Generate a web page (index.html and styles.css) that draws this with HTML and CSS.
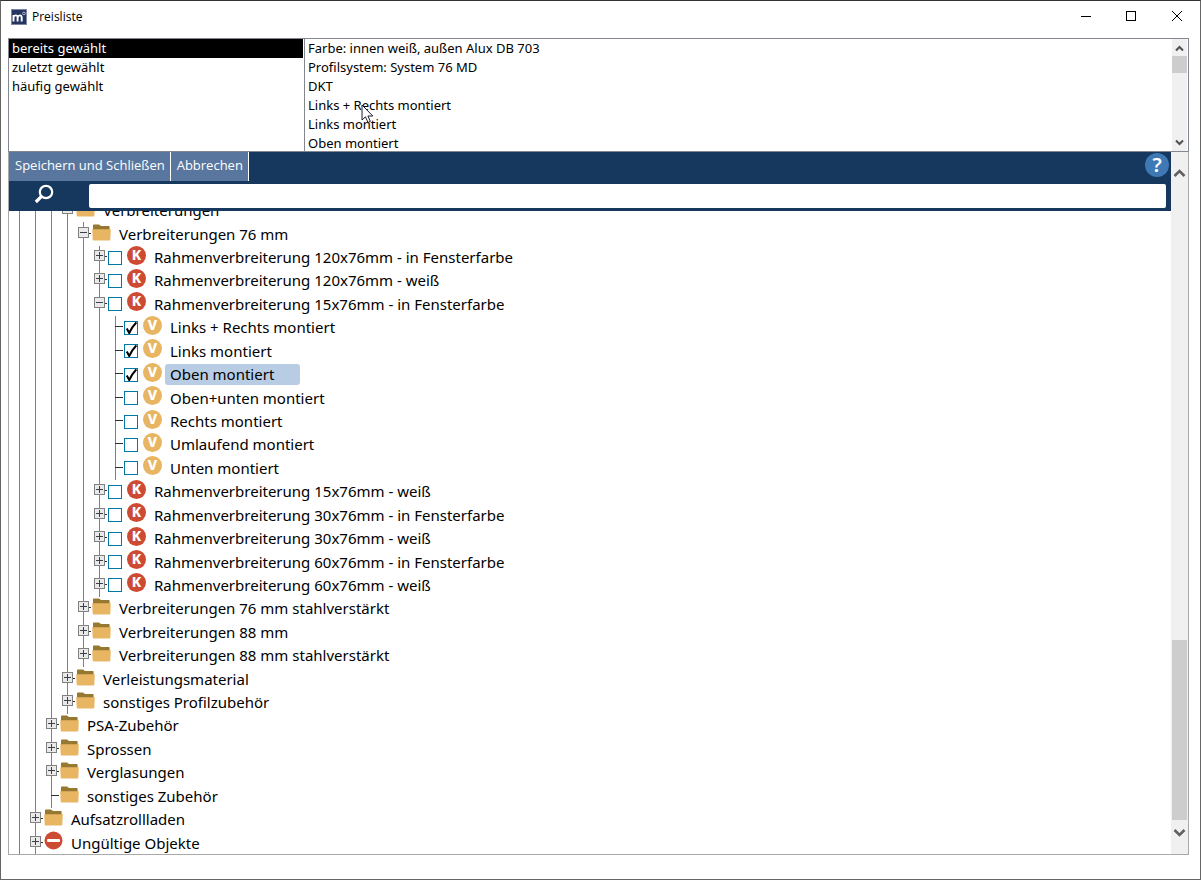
FILE: index.html
```html
<!DOCTYPE html>
<html lang="de">
<head>
<meta charset="utf-8">
<title>Preisliste</title>
<link rel="stylesheet" href="styles.css">
</head>
<body>
<div class="window">
  <header class="titlebar">
    <svg class="app-icon" width="16" height="16" viewBox="0 0 16 16" aria-hidden="true">
      <rect x="0.5" y="0.5" width="15" height="15" fill="#26355f" stroke="#7d86a3"/>
      <path d="M2.5 12.5V6M2.5 8.2Q3 6.4 4.8 6.4T6.6 8.4V12.5M6.6 8.4Q7.2 6.4 8.9 6.4T10.7 8.4V12.5" fill="none" stroke="#fff" stroke-width="1.9"/>
      <circle cx="12.9" cy="4.4" r="1.3" fill="none" stroke="#c3c9da" stroke-width="0.9"/>
    </svg>
    <h1 class="title">Preisliste</h1>
    <div class="window-buttons">
      <button type="button" aria-label="Minimieren"><svg width="12" height="12" viewBox="0 0 12 12"><path d="M1 5.5H11" stroke="#000"/></svg></button>
      <button type="button" aria-label="Maximieren"><svg width="12" height="12" viewBox="0 0 12 12"><rect x="1.5" y="0.5" width="9" height="9" fill="none" stroke="#000"/></svg></button>
      <button type="button" aria-label="Schließen"><svg width="12" height="12" viewBox="0 0 12 12"><path d="M2 0L12 10M12 0L2 10" stroke="#000"/></svg></button>
    </div>
  </header>

  <main class="frame">
    <section class="lists">
      <ul class="list list-filter">
        <li class="selected">bereits gewählt</li>
        <li>zuletzt gewählt</li>
        <li>häufig gewählt</li>
      </ul>
      <ul class="list list-items">
        <li>Farbe: innen weiß, außen Alux DB 703</li>
        <li>Profilsystem: System 76 MD</li>
        <li>DKT</li>
        <li>Links + Rechts montiert</li>
        <li>Links montiert</li>
        <li>Oben montiert</li>
      </ul>
      <div class="scrollbar scrollbar-list">
        <svg width="9" height="7" viewBox="0 0 9 7"><path d="M1 5.5L4.5 2L8 5.5" fill="none" stroke="#505050" stroke-width="2"/></svg>
        <div class="thumb"></div>
        <svg width="9" height="7" viewBox="0 0 9 7"><path d="M1 1.5L4.5 5L8 1.5" fill="none" stroke="#505050" stroke-width="2"/></svg>
      </div>
      <svg class="pointer" width="13" height="20" viewBox="0 0 13 20"><path d="M1 1V16L4.4 12.8L7 18.5L9.4 17.4L6.9 12H11.8Z" fill="#fff" stroke="#1c1c2c"/></svg>
    </section>

    <section class="browser">
      <div class="content">
        <div class="toolbar">
          <div class="actions">
            <button type="button" class="action">Speichern und Schließen</button>
            <button type="button" class="action">Abbrechen</button>
            <button type="button" class="help" aria-label="Hilfe">?</button>
          </div>
          <div class="search">
            <label for="q" aria-label="Suchen"><svg width="20" height="20" viewBox="0 0 20 20"><circle cx="12" cy="8" r="6.2" fill="none" stroke="#fff" stroke-width="2.2"/><path d="M7.8 12.2L1.8 18" stroke="#fff" stroke-width="3.2"/></svg></label>
            <input id="q" type="text">
          </div>
        </div>
        <div class="tree-view"><ul class="tree" id="tree"></ul></div>
      </div>
      <div class="scrollbar scrollbar-tree">
        <svg width="13" height="10" viewBox="0 0 13 10"><path d="M1.5 8L6.5 3L11.5 8" fill="none" stroke="#606060" stroke-width="2.6"/></svg>
        <div class="track"><div class="thumb"></div></div>
        <svg width="13" height="10" viewBox="0 0 13 10"><path d="M1.5 2L6.5 7L11.5 2" fill="none" stroke="#606060" stroke-width="2.6"/></svg>
      </div>
    </section>
  </main>
</div>
<script src="tree.js"></script>
</body>
</html>
```
FILE: tree.js
```js
// [depth, toggle, kind, label, checked, selected]
const rows = [
  [3, "-", "folder", "Verbreiterungen"],
  [4, "-", "folder", "Verbreiterungen 76 mm"],
  [5, "+", "k", "Rahmenverbreiterung 120x76mm - in Fensterfarbe"],
  [5, "+", "k", "Rahmenverbreiterung 120x76mm - weiß"],
  [5, "-", "k", "Rahmenverbreiterung 15x76mm - in Fensterfarbe"],
  [6, "", "v", "Links + Rechts montiert", true],
  [6, "", "v", "Links montiert", true],
  [6, "", "v", "Oben montiert", true, true],
  [6, "", "v", "Oben+unten montiert"],
  [6, "", "v", "Rechts montiert"],
  [6, "", "v", "Umlaufend montiert"],
  [6, "", "v", "Unten montiert"],
  [5, "+", "k", "Rahmenverbreiterung 15x76mm - weiß"],
  [5, "+", "k", "Rahmenverbreiterung 30x76mm - in Fensterfarbe"],
  [5, "+", "k", "Rahmenverbreiterung 30x76mm - weiß"],
  [5, "+", "k", "Rahmenverbreiterung 60x76mm - in Fensterfarbe"],
  [5, "+", "k", "Rahmenverbreiterung 60x76mm - weiß"],
  [4, "+", "folder", "Verbreiterungen 76 mm stahlverstärkt"],
  [4, "+", "folder", "Verbreiterungen 88 mm"],
  [4, "+", "folder", "Verbreiterungen 88 mm stahlverstärkt"],
  [3, "+", "folder", "Verleistungsmaterial"],
  [3, "+", "folder", "sonstiges Profilzubehör"],
  [2, "+", "folder", "PSA-Zubehör"],
  [2, "+", "folder", "Sprossen"],
  [2, "+", "folder", "Verglasungen"],
  [2, "", "folder", "sonstiges Zubehör"],
  [1, "+", "folder", "Aufsatzrollladen"],
  [1, "+", "invalid", "Ungültige Objekte"]
];

const icons = {
  folder: '<svg class="icon folder" width="19" height="17" viewBox="0 0 19 17"><path d="M1 1Q1 0.5 1.8 0.5H7L9 2H17Q17.6 2 17.6 2.8V6H1Z" fill="#977831"/><path d="M0.2 5.2H18.8L18.3 15.8Q18.2 16.4 17.5 16.4H1.5Q0.8 16.4 0.7 15.8Z" fill="#e8b562"/></svg>',
  invalid: '<svg class="icon" width="19" height="19" viewBox="0 0 19 19"><circle cx="9.5" cy="9.5" r="9" fill="#cd4b33"/><rect x="3" y="8" width="13" height="3" rx="1" fill="#fff"/></svg>',
  k: '<span class="icon badge badge-k">K</span>',
  v: '<span class="icon badge badge-v">V</span>'
};

document.getElementById("tree").innerHTML = rows.map(([depth, toggle, kind, label, checked, selected], i) => {
  const guides = '<span class="guide"></span>'.repeat(depth);
  const sign = toggle
    ? `<button type="button" class="toggle" aria-label="${toggle === "-" ? "Zuklappen" : "Aufklappen"}"><svg width="11" height="11" viewBox="0 0 11 11"><rect x="0.5" y="0.5" width="10" height="10" fill="#e9e9e9" stroke="#808080"/><path d="M2 5.5H9${toggle === "+" ? "M5.5 2V9" : ""}" stroke="#3c4048"/></svg></button>`
    : "";
  const node = `<span class="guide node${toggle ? "" : " leaf"}">${sign}</span>`;
  const tick = kind === "k" || kind === "v"
    ? `<input type="checkbox" id="n${i}"${checked ? " checked" : ""}>`
    : "";
  const text = tick
    ? `<label class="text${selected ? " selected" : ""}" for="n${i}">${label}</label>`
    : `<span class="text">${label}</span>`;
  return `<li class="row">${guides}${node}${tick}${icons[kind]}${text}</li>`;
}).join("");
```
FILE: styles.css
```css
* { box-sizing: border-box; }

body {
  margin: 0;
  background: #fff;
  color: #000;
  font-family: "Noto Sans", "Open Sans", sans-serif;
  font-size: 13px;
}

ul { list-style: none; margin: 0; padding: 0; }
button { border: 0; padding: 0; background: none; font: inherit; color: inherit; }
svg { display: block; flex: none; }

.window {
  display: flex;
  flex-direction: column;
  height: 100vh;
  padding: 0 11px 24px 7px;
  border: 1px solid #666;
  border-top-color: #333;
}

/* title bar */
.titlebar {
  display: flex;
  flex: none;
  align-items: center;
  height: 37px;
  padding: 0 0 6px 3px;
}
.title {
  flex: 1;
  margin: 0 0 0 5px;
  font-family: "Open Sans", sans-serif;
  font-size: 12px;
  font-weight: 400;
}
.window-buttons { display: flex; gap: 33px; padding-right: 7px; }

.frame { display: flex; flex: 1; flex-direction: column; min-height: 0; }

/* selection lists */
.lists {
  position: relative;
  display: flex;
  flex: none;
  height: 114px;
  border: 1px solid #828790;
}
.list { overflow: hidden; line-height: 19px; }
.list-filter { flex: 0 0 296px; padding-right: 1px; border-right: 1px solid #828790; }
.list-items { flex: 1; }
.list li { padding-left: 3px; white-space: nowrap; }
.list .selected { background: #000; color: #fff; }
.pointer { position: absolute; left: 352px; top: 65px; }

/* scrollbars */
.scrollbar {
  display: flex;
  flex: none;
  flex-direction: column;
  align-items: center;
  background: #f0f0f0;
}
.thumb { width: 15px; background: #cdcdcd; }
.scrollbar-list { width: 15px; margin-right: 1px; padding: 6px 0 5px; }
.scrollbar-list .thumb { height: 17px; margin: 4px 0 auto; }
.scrollbar-tree { width: 17px; padding: 16px 0; }
.track { display: flex; flex: 1; flex-direction: column; justify-content: flex-end; padding-bottom: 8px; }
.track .thumb { height: 28%; }

.browser {
  display: flex;
  flex: 1;
  min-height: 0;
  border: 1px solid #a9a9a9;
  border-top: 0;
}
.content { display: flex; flex: 1; flex-direction: column; min-width: 0; }

/* toolbar */
.toolbar { flex: none; background: #16375e; color: #fff; }
.actions { display: flex; height: 29px; }
.action {
  padding: 0 5px 3px 6px;
  border-right: 1px solid #fff;
  background: #58769e;
  font-family: "Open Sans", sans-serif;
  font-weight: 500;
}
.help {
  width: 24px;
  height: 24px;
  margin: 1px 2px 0 auto;
  border-radius: 50%;
  background: #3e78b5;
  font-size: 20px;
  font-weight: 600;
  line-height: 24px;
}
.search { display: flex; height: 30px; padding: 3px 5px 3px 0; }
.search label { width: 80px; padding-left: 25px; }
.search input {
  flex: 1;
  min-width: 0;
  padding: 0 6px;
  border: 0;
  border-radius: 2px;
  background: #fff;
  font: inherit;
}

/* tree */
.tree-view { display: flex; flex: 1; min-height: 0; overflow: hidden; }
.tree { display: flex; flex: 1; flex-direction: column; margin: -12px 0 -1px; padding-left: 2px; }
.row {
  display: flex;
  flex: 1;
  align-items: center;
  min-height: 0;
  font-size: 15px;
  white-space: nowrap;
}
.guide {
  display: flex;
  flex: none;
  align-self: stretch;
  align-items: center;
  width: 16px;
  background: linear-gradient(#808080, #808080) 8px 0 / 1px 100% no-repeat;
}
.node {
  margin-right: 1px;
  padding: 0 0 4px 3px;
  background:
    linear-gradient(#303030, #303030) 100% calc(50% - 1px) / 3px 1px no-repeat,
    linear-gradient(#808080, #808080) 8px 0 / 1px 100% no-repeat;
}
.leaf {
  background:
    linear-gradient(#303030, #303030) 100% calc(50% - 1px) / 8px 1px no-repeat,
    linear-gradient(#808080, #808080) 8px 0 / 1px 100% no-repeat;
}
.row input {
  appearance: none;
  flex: none;
  width: 14px;
  height: 14px;
  margin: 0 5px 0 0;
  border: 1px solid #0078a8;
  background: #fff;
}
.row input:checked {
  background: #fff url("data:image/svg+xml,%3Csvg xmlns='http://www.w3.org/2000/svg' viewBox='0 0 12 12'%3E%3Cpath d='M1.8 6.6L4.2 11Q6.5 5.5 11.4 0.4' fill='none' stroke='%23000' stroke-width='2'/%3E%3C/svg%3E") center / 12px 12px no-repeat;
}
.icon { flex: none; width: 19px; margin: 0 3px 5px 0; }
.folder { margin-bottom: 4px; }
.badge {
  height: 19px;
  border-radius: 50%;
  color: #fff;
  font-size: 14px;
  font-weight: 800;
  line-height: 18px;
  text-align: center;
}
.badge-k { background: #cd4b33; }
.badge-v { background: #e8b562; }
.text { padding: 0 5px; border-radius: 3px; line-height: 21px; }
.text.selected { padding-right: 26px; background: #b8cce4; }
```
